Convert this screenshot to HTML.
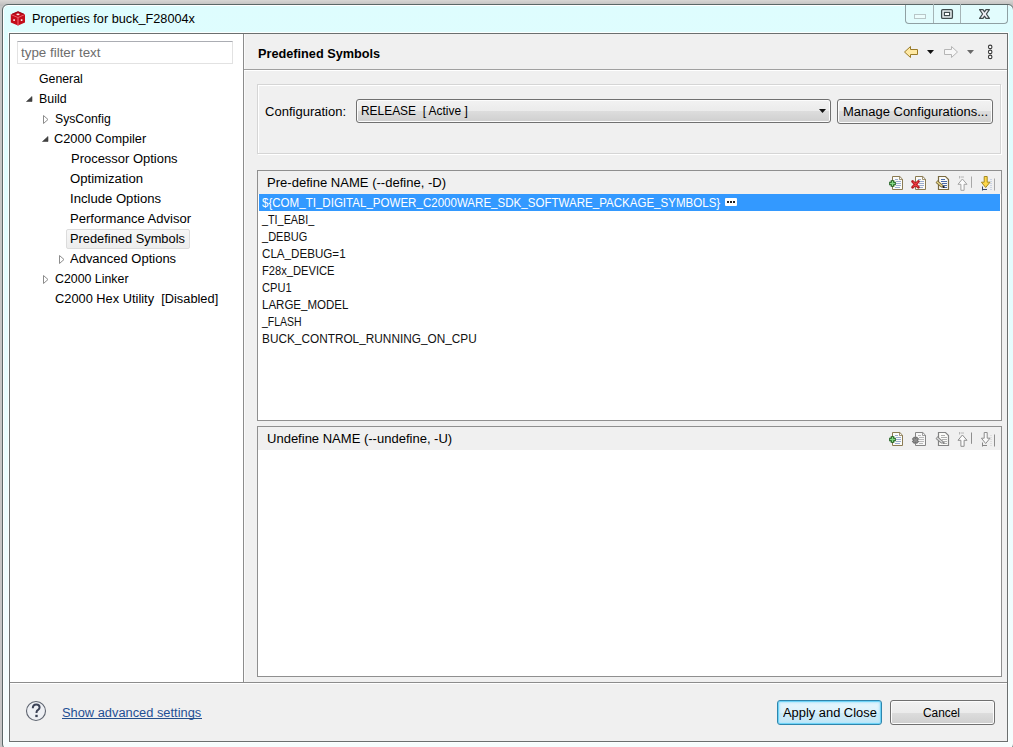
<!DOCTYPE html>
<html><head><meta charset="utf-8">
<style>
*{margin:0;padding:0;box-sizing:border-box}
html,body{width:1013px;height:747px;overflow:hidden;background:#c6c6c6;font-family:"Liberation Sans",sans-serif;font-size:12px;color:#111}
.a{position:absolute}
svg{position:absolute;overflow:visible}
.t{position:absolute;white-space:pre;line-height:14px;height:14px;transform-origin:0 0}
.u{position:relative;top:-1px}
#desk{left:0;top:0;width:1013px;height:6px;background:linear-gradient(#d8d6d4,#bcbcbc)}
#frame{left:2px;top:4px;width:1012px;height:746px;background:linear-gradient(#defdfe 0,#e2fcfe 200px,#ecfdfe 500px,#f6fdfd 100%);border:1px solid #5a6767;border-radius:6px 6px 6px 6px;box-shadow:inset 0 1px 0 #fff, inset 1px 0 0 #fff}
#client{left:9px;top:33px;width:999px;height:709px;background:#f0f0f0;border:1px solid #6b6f6f;box-shadow:0 0 0 1px #fbffff}
#tree{left:10px;top:34px;width:233px;height:648px;background:#fff}
#sash{left:243px;top:34px;width:1px;height:648px;background:#8c8c8c}
#sashw{left:244px;top:34px;width:1px;height:648px;background:#fafafa}
#filter{left:17px;top:41px;width:216px;height:23px;border:1px solid #e2e2e2;border-top-color:#abadb3;background:#fff}
#hdrline{left:244px;top:69px;width:763px;height:1px;background:#a0a0a0}
#hdrlinew{left:244px;top:70px;width:763px;height:1px;background:#fff}
#grp{left:257px;top:84px;width:744px;height:70px;border:1px solid #d5d5d5;box-shadow:inset 1px 1px 0 #fff, 1px 1px 0 #fff}
#combo{left:356px;top:99px;width:475px;height:24px;border:1px solid #707070;border-radius:3px;background:linear-gradient(#f2f2f2 0,#ebebeb 50%,#dddddd 50%,#cfcfcf 100%);box-shadow:inset 0 0 0 1px #fcfcfc}
#mgr{left:837px;top:99px;width:156px;height:25px;border:1px solid #707070;border-radius:3px;background:linear-gradient(#f2f2f2 0,#ebebeb 50%,#dddddd 50%,#cfcfcf 100%);box-shadow:inset 0 0 0 1px #fcfcfc}
#list1{left:257px;top:170px;width:745px;height:251px;border:1px solid #8f8f8f;background:#fff}
#list1h{left:258px;top:171px;width:743px;height:23px;background:#f0f0f0}
#sel{left:259px;top:194px;width:741px;height:17px;background:#3399ff}
#list2{left:257px;top:426px;width:745px;height:251px;border:1px solid #8f8f8f;background:#fff}
#list2h{left:258px;top:427px;width:743px;height:23px;background:#f0f0f0}
#botline{left:10px;top:682px;width:997px;height:1px;background:#8c8c8c}
#botlinew{left:10px;top:683px;width:997px;height:1px;background:#fff}
#apply{left:777px;top:700px;width:105px;height:25px;border:1px solid #2f86ad;border-radius:3px;background:linear-gradient(#e6f6fd 0,#dcf2fb 50%,#cdebf8 50%,#c4e6f6 100%);box-shadow:inset 0 0 0 1px #6ed3f7, inset 0 0 2px 2px #b4e6fa}
#cancel{left:890px;top:700px;width:105px;height:25px;border:1px solid #707070;border-radius:3px;background:linear-gradient(#f2f2f2 0,#ebebeb 50%,#dddddd 50%,#cfcfcf 100%);box-shadow:inset 0 0 0 1px #fcfcfc}
#treesel{left:66px;top:229px;width:124px;height:20px;border:1px solid #dcdcdc;border-radius:2px;background:linear-gradient(#f7f7f7,#ededed)}
#capgrp{left:905px;top:5px;width:103px;height:19px;border:1px solid #8fa0a3;border-top:none;border-radius:0 0 4px 4px;background:#e2fcfd}
</style></head><body>
<div class="a" id="desk"></div>
<div class="a" id="frame"></div>
<div class="a" id="capgrp"></div>
<div class="a" style="left:933px;top:4px;width:1px;height:19px;background:#a5b4b6"></div>
<div class="a" style="left:960px;top:4px;width:1px;height:19px;background:#a5b4b6"></div>
<!-- minimize (disabled) -->
<div class="a" style="left:914px;top:14px;width:12px;height:5px;border:1px solid #b9c6c8;background:#ecfdfd"></div>
<!-- maximize -->
<svg style="left:0;top:0" width="1" height="1">
<rect x="941.6" y="9.6" width="10.8" height="8.8" rx="1.2" fill="#e9eff1" stroke="#3f4a4c" stroke-width="1.3"/>
<rect x="944.4" y="12.4" width="5.2" height="3.2" fill="#fff" stroke="#3f4a4c" stroke-width="1.2"/>
</svg>
<!-- close -->
<svg style="left:0;top:0" width="1" height="1">
<path d="M979.6 9.6 H983 L984.5 11.8 L986 9.6 H989.4 L986.4 14 L989.4 18.4 H986 L984.5 16.2 L983 18.4 H979.6 L982.6 14 Z" fill="#f1f1f7" stroke="#3f4a4c" stroke-width="1.2" stroke-linejoin="round"/>
</svg>
<!-- title icon -->
<svg style="left:0;top:0" width="1" height="1">
<path d="M18 11.2 L25 14.4 V22.4 L18 25.6 L10.8 22.4 V14.4 Z" fill="#c40d1a"/>
<path d="M10.8 14.4 L18 17.6 L25 14.4" fill="none" stroke="#f06470" stroke-width="0.9"/>
<path d="M18 17.6 V25.6" stroke="#f25a6a" stroke-width="1.2"/>
<path d="M12 14.2 L18 11.8 L24 14.2" fill="none" stroke="#8a0010" stroke-width="0.8"/>
<ellipse cx="18" cy="14.3" rx="1.6" ry="0.9" fill="#fbe8ea"/>
<rect x="13.3" y="19.3" width="1.6" height="1.6" fill="#fff"/>
<rect x="20.8" y="19.3" width="1.6" height="1.6" fill="#fff"/>
</svg>
<div class="a" id="client"></div>
<div class="a" id="tree"></div>
<div class="a" id="sash"></div>
<div class="a" id="sashw"></div>
<div class="a" id="filter"></div>
<div class="a" id="treesel"></div>
<!-- tree triangles -->
<svg style="left:0;top:0" width="1" height="1">
<path d="M26.5 101.5 L32 96.5 L32 101.5 Z" fill="#404040" stroke="#404040" stroke-width="0.6" stroke-linejoin="round"/>
<path d="M42.5 141.5 L48 136.5 L48 141.5 Z" fill="#404040" stroke="#404040" stroke-width="0.6" stroke-linejoin="round"/>
<path d="M43.5 115.5 L48 119.5 L43.5 123.5 Z" fill="none" stroke="#8c8c8c" stroke-width="1"/>
<path d="M59.5 255.5 L64 259.5 L59.5 263.5 Z" fill="none" stroke="#8c8c8c" stroke-width="1"/>
<path d="M43.5 275.5 L48 279.5 L43.5 283.5 Z" fill="none" stroke="#8c8c8c" stroke-width="1"/>
</svg>

<div class="a" id="hdrline"></div>
<div class="a" id="hdrlinew"></div>
<!-- header toolbar -->
<svg style="left:0;top:0" width="1" height="1">
<path d="M904.5 52 L910.5 46.5 V49.5 H917.5 V54.5 H910.5 V57.5 Z" fill="#ffe9a3" stroke="#9a7b28" stroke-width="1" stroke-linejoin="round"/>
<path d="M927 50 H934 L930.5 54 Z" fill="#111"/>
<path d="M957.5 52 L951.5 46.5 V49.5 H944.5 V54.5 H951.5 V57.5 Z" fill="#f7f7f7" stroke="#b5b5b5" stroke-width="1" stroke-linejoin="round"/>
<path d="M967 50 H974 L970.5 54 Z" fill="#6a6a6a"/>
<circle cx="990.2" cy="46.9" r="1.75" fill="#fff" stroke="#3a3a3a" stroke-width="1.1"/>
<circle cx="990.2" cy="51.9" r="1.75" fill="#fff" stroke="#3a3a3a" stroke-width="1.1"/>
<circle cx="990.2" cy="56.9" r="1.75" fill="#fff" stroke="#3a3a3a" stroke-width="1.1"/>
</svg>

<div class="a" id="grp"></div>
<div class="a" id="combo"></div>
<svg style="left:0;top:0" width="1" height="1"><path d="M819 109 H826 L822.5 113 Z" fill="#111"/></svg>
<div class="a" id="mgr"></div>

<div class="a" id="list1"></div>
<div class="a" id="list1h"></div>
<div class="a" id="sel"></div>
<div class="a" style="left:725px;top:198px;width:12px;height:8px;background:#fff;border-radius:1px"></div>
<svg style="left:0;top:0" width="1" height="1">
<rect x="727" y="201" width="2" height="2" fill="#222"/><rect x="730" y="201" width="2" height="2" fill="#222"/><rect x="733" y="201" width="2" height="2" fill="#222"/>
</svg>
<!-- list1 toolbar icons -->
<svg style="left:0;top:0" width="1" height="1">
<path d="M892.5 176.5 H899.8 L902.5 179.2 V189.5 H892.5 Z" fill="#fbfbf8" stroke="#8a7a52" stroke-width="1"/>
<path d="M899.5 176.5 V179.5 H902.5" fill="none" stroke="#8a7a52" stroke-width="0.8"/>
<path d="M895 179.5 H898 M896 181.5 H901 M896 183.5 H901 M896 185.5 H901 M895 187.5 H900" stroke="#8fa3c8" stroke-width="0.9"/>
<path d="M892.5 180.2 V186.8 M889.2 183.5 H895.8" stroke="#165a16" stroke-width="3.6"/>
<path d="M892.5 181 V186 M890 183.5 H895" stroke="#86d886" stroke-width="1.4"/>
<path d="M915.5 176.5 H922.8 L925.5 179.2 V189.5 H915.5 Z" fill="#fbfbf8" stroke="#8a7a52" stroke-width="1"/>
<path d="M922.5 176.5 V179.5 H925.5" fill="none" stroke="#8a7a52" stroke-width="0.8"/>
<path d="M918 179.5 H921 M919 181.5 H924 M919 183.5 H924 M919 185.5 H924 M919 187.5 H923" stroke="#8fa3c8" stroke-width="0.9"/>
<path d="M912.6 181.4 L918.4 187.2 M918.4 181.4 L912.6 187.2" stroke="#b01c20" stroke-width="2.8" stroke-linecap="round"/>
<path d="M913.2 182 L917.8 186.6 M917.8 182 L913.2 186.6" stroke="#ec3a40" stroke-width="1.2" stroke-linecap="round"/>
<path d="M938.5 176.5 H945.5 L948.5 179.5 V189.5 H938.5 Z" fill="#fbfbf8" stroke="#7a6a40" stroke-width="1.2"/>
<path d="M941 179.5 H945 M941 181.5 H947 M942 183.5 H947 M943 185.5 H947 M944 187.5 H947" stroke="#4a6aa8" stroke-width="1"/>
<path d="M936.5 181.5 L942.5 186.5" stroke="#7a6a40" stroke-width="3"/>
<path d="M936.8 181.7 L942.2 186.2" stroke="#e8d888" stroke-width="1.3"/>
<rect x="942.5" y="186" width="2" height="2" fill="#222"/>
<path d="M962.4 179 L958 184.3 H960.9 V190.3 H964.1 V184.3 H967 Z" fill="#fcfcfc" stroke="#a4a4a4" stroke-width="1" stroke-linejoin="round"/>
<path d="M959.5 176 V178.5 M960.5 177 H964" stroke="#b0b0b0" stroke-width="0.9"/>
<path d="M971.5 176.5 V187.8" stroke="#a8a8a8" stroke-width="1"/>
<path d="M984.2 176.5 H987.2 V182.2 H990 L985.7 187.5 L981.4 182.2 H984.2 Z" fill="#ffd84a" stroke="#a58a22" stroke-width="1" stroke-linejoin="round"/>
<path d="M983 189.5 H987 M982.5 186.5 V190.5" stroke="#3a4a6a" stroke-width="1"/>
<path d="M991 179 V190" stroke="#9fb0d0" stroke-width="0.9" stroke-dasharray="1 1"/>
<path d="M994.5 178.5 V190.5" stroke="#a8a8a8" stroke-width="1"/>
</svg>

<div class="a" id="list2"></div>
<div class="a" id="list2h"></div>
<svg style="left:0;top:0" width="1" height="1">
<path d="M892.5 432.5 H899.8 L902.5 435.2 V445.5 H892.5 Z" fill="#fbfbf8" stroke="#8a7a52" stroke-width="1"/>
<path d="M899.5 432.5 V435.5 H902.5" fill="none" stroke="#8a7a52" stroke-width="0.8"/>
<path d="M895 435.5 H898 M896 437.5 H901 M896 439.5 H901 M896 441.5 H901 M895 443.5 H900" stroke="#8fa3c8" stroke-width="0.9"/>
<path d="M892.5 436.2 V442.8 M889.2 439.5 H895.8" stroke="#165a16" stroke-width="3.6"/>
<path d="M892.5 437 V442 M890 439.5 H895" stroke="#86d886" stroke-width="1.4"/>
<path d="M915.5 432.5 H922.8 L925.5 435.2 V445.5 H915.5 Z" fill="#f7f7f7" stroke="#868686" stroke-width="1"/>
<path d="M922.5 432.5 V435.5 H925.5" fill="none" stroke="#868686" stroke-width="0.8"/>
<path d="M918 435.5 H921 M919 437.5 H924 M919 439.5 H924 M919 441.5 H924 M919 443.5 H923" stroke="#b0b0b0" stroke-width="0.9"/>
<path d="M913 437.8 L918 442.8 M918 437.8 L913 442.8" stroke="#6e6e6e" stroke-width="3.4"/>
<path d="M913.6 438.4 L917.4 442.2 M917.4 438.4 L913.6 442.2" stroke="#8e8e8e" stroke-width="1.6"/>
<path d="M938.5 432.5 H945.5 L948.5 435.5 V445.5 H938.5 Z" fill="#fbfbf8" stroke="#838383" stroke-width="1.2"/>
<path d="M941 435.5 H945 M941 437.5 H947 M942 439.5 H947 M943 441.5 H947 M944 443.5 H947" stroke="#b0b0b0" stroke-width="1"/>
<path d="M936.5 437.5 L942.5 442.5" stroke="#838383" stroke-width="3"/>
<path d="M936.8 437.7 L942.2 442.2" stroke="#dcdcdc" stroke-width="1.3"/>
<rect x="942.5" y="442" width="2" height="2" fill="#888"/>
<path d="M962.4 435 L958 440.3 H960.9 V446.3 H964.1 V440.3 H967 Z" fill="#fcfcfc" stroke="#8e8e8e" stroke-width="1" stroke-linejoin="round"/>
<path d="M959.5 432 V434.5 M960.5 433 H964" stroke="#b0b0b0" stroke-width="0.9"/>
<path d="M971.5 432.5 V443.8" stroke="#8e8e8e" stroke-width="1"/>
<path d="M984.2 432.5 H987.2 V438.2 H990 L985.7 443.5 L981.4 438.2 H984.2 Z" fill="#fafafa" stroke="#8e8e8e" stroke-width="1" stroke-linejoin="round"/>
<path d="M983 445.5 H987 M982.5 442.5 V446.5" stroke="#868686" stroke-width="1"/>
<path d="M991 435 V446" stroke="#c8c8c8" stroke-width="0.9" stroke-dasharray="1 1"/>
<path d="M994.5 434.5 V446.5" stroke="#8e8e8e" stroke-width="1"/>
</svg>

<div class="a" id="botline"></div>
<div class="a" id="botlinew"></div>
<!-- help icon -->
<svg style="left:0;top:0" width="1" height="1">
<circle cx="36" cy="711" r="9.5" fill="#eef0f4" stroke="#5f6470" stroke-width="1.1"/>
<path d="M32.8 708.3 C32.8 705.8 34.4 704.6 36.3 704.6 C38.4 704.6 39.6 705.9 39.6 707.6 C39.6 709.4 37.8 709.9 36.9 711 C36.6 711.4 36.5 712 36.5 713" fill="none" stroke="#3b4256" stroke-width="2"/>
<rect x="35.3" y="714.8" width="2.4" height="2.3" fill="#3b4256"/>
</svg>
<div class="a" style="left:62px;top:718px;width:140px;height:1px;background:#244f8c"></div>
<div class="a" id="apply"></div>
<div class="a" id="cancel"></div>
<div class="t" style="left:32.10px;top:12.00px;font-size:12px;transform:scaleX(1.0572);color:#000">Properties for buck<span class="u">_</span>F28004x</div>
<div class="t" style="left:21.40px;top:46.00px;font-size:12px;transform:scaleX(1.1140);color:#6d6d6d">type filter text</div>
<div class="t" style="left:38.60px;top:72.00px;font-size:12px;transform:scaleX(1.0259);color:#000">General</div>
<div class="t" style="left:38.60px;top:92.00px;font-size:12px;transform:scaleX(1.0333);color:#000">Build</div>
<div class="t" style="left:54.60px;top:112.00px;font-size:12px;transform:scaleX(1.0184);color:#000">SysConfig</div>
<div class="t" style="left:54.30px;top:132.00px;font-size:12px;transform:scaleX(1.0633);color:#000">C2000 Compiler</div>
<div class="t" style="left:70.60px;top:152.00px;font-size:12px;transform:scaleX(1.0799);color:#000">Processor Options</div>
<div class="t" style="left:70.40px;top:172.00px;font-size:12px;transform:scaleX(1.0960);color:#000">Optimization</div>
<div class="t" style="left:70.40px;top:192.00px;font-size:12px;transform:scaleX(1.0925);color:#000">Include Options</div>
<div class="t" style="left:70.40px;top:212.00px;font-size:12px;transform:scaleX(1.0872);color:#000">Performance Advisor</div>
<div class="t" style="left:70.40px;top:232.00px;font-size:12px;transform:scaleX(1.0700);color:#000">Predefined Symbols</div>
<div class="t" style="left:70.40px;top:252.00px;font-size:12px;transform:scaleX(1.0819);color:#000">Advanced Options</div>
<div class="t" style="left:54.60px;top:272.00px;font-size:12px;transform:scaleX(1.0298);color:#000">C2000 Linker</div>
<div class="t" style="left:54.60px;top:292.00px;font-size:12px;transform:scaleX(1.0685);color:#000">C2000 Hex Utility  [Disabled]</div>
<div class="t" style="left:257.70px;top:47.00px;font-size:13.5px;transform:scaleX(0.9415);color:#000;font-weight:bold">Predefined Symbols</div>
<div class="t" style="left:265.30px;top:105.00px;font-size:12px;transform:scaleX(1.0855);color:#000">Configuration:</div>
<div class="t" style="left:360.50px;top:104.00px;font-size:12px;transform:scaleX(0.9937);color:#000">RELEASE  [ Active ]</div>
<div class="t" style="left:842.60px;top:105.00px;font-size:12px;transform:scaleX(1.0815);color:#000">Manage Configurations...</div>
<div class="t" style="left:267.40px;top:176.00px;font-size:12px;transform:scaleX(1.0874);color:#000">Pre-define NAME (--define, -D)</div>
<div class="t" style="left:261.70px;top:196.00px;font-size:12px;transform:scaleX(0.9619);color:#fff">${COM<span class="u">_</span>TI<span class="u">_</span>DIGITAL<span class="u">_</span>POWER<span class="u">_</span>C2000WARE<span class="u">_</span>SDK<span class="u">_</span>SOFTWARE<span class="u">_</span>PACKAGE<span class="u">_</span>SYMBOLS}</div>
<div class="t" style="left:261.87px;top:213.00px;font-size:12px;transform:scaleX(0.8995);color:#111"><span class="u">_</span>TI<span class="u">_</span>EABI<span class="u">_</span></div>
<div class="t" style="left:261.88px;top:230.00px;font-size:12px;transform:scaleX(0.9165);color:#111"><span class="u">_</span>DEBUG</div>
<div class="t" style="left:261.70px;top:247.00px;font-size:12px;transform:scaleX(0.9679);color:#111">CLA<span class="u">_</span>DEBUG=1</div>
<div class="t" style="left:261.70px;top:264.00px;font-size:12px;transform:scaleX(0.9292);color:#111">F28x<span class="u">_</span>DEVICE</div>
<div class="t" style="left:261.70px;top:281.00px;font-size:12px;transform:scaleX(0.9245);color:#111">CPU1</div>
<div class="t" style="left:261.70px;top:298.00px;font-size:12px;transform:scaleX(0.9597);color:#111">LARGE<span class="u">_</span>MODEL</div>
<div class="t" style="left:261.87px;top:315.00px;font-size:12px;transform:scaleX(0.8740);color:#111"><span class="u">_</span>FLASH</div>
<div class="t" style="left:261.70px;top:332.00px;font-size:12px;transform:scaleX(0.9847);color:#111">BUCK<span class="u">_</span>CONTROL<span class="u">_</span>RUNNING<span class="u">_</span>ON<span class="u">_</span>CPU</div>
<div class="t" style="left:267.40px;top:432.00px;font-size:12px;transform:scaleX(1.0847);color:#000">Undefine NAME (--undefine, -U)</div>
<div class="t" style="left:62.40px;top:706.00px;font-size:12px;transform:scaleX(1.0701);color:#1f4f94">Show advanced settings</div>
<div class="t" style="left:782.50px;top:706.00px;font-size:12px;transform:scaleX(1.0734);color:#000">Apply and Close</div>
<div class="t" style="left:923.30px;top:706.00px;font-size:12px;transform:scaleX(0.9905);color:#000">Cancel</div>
</body></html>
